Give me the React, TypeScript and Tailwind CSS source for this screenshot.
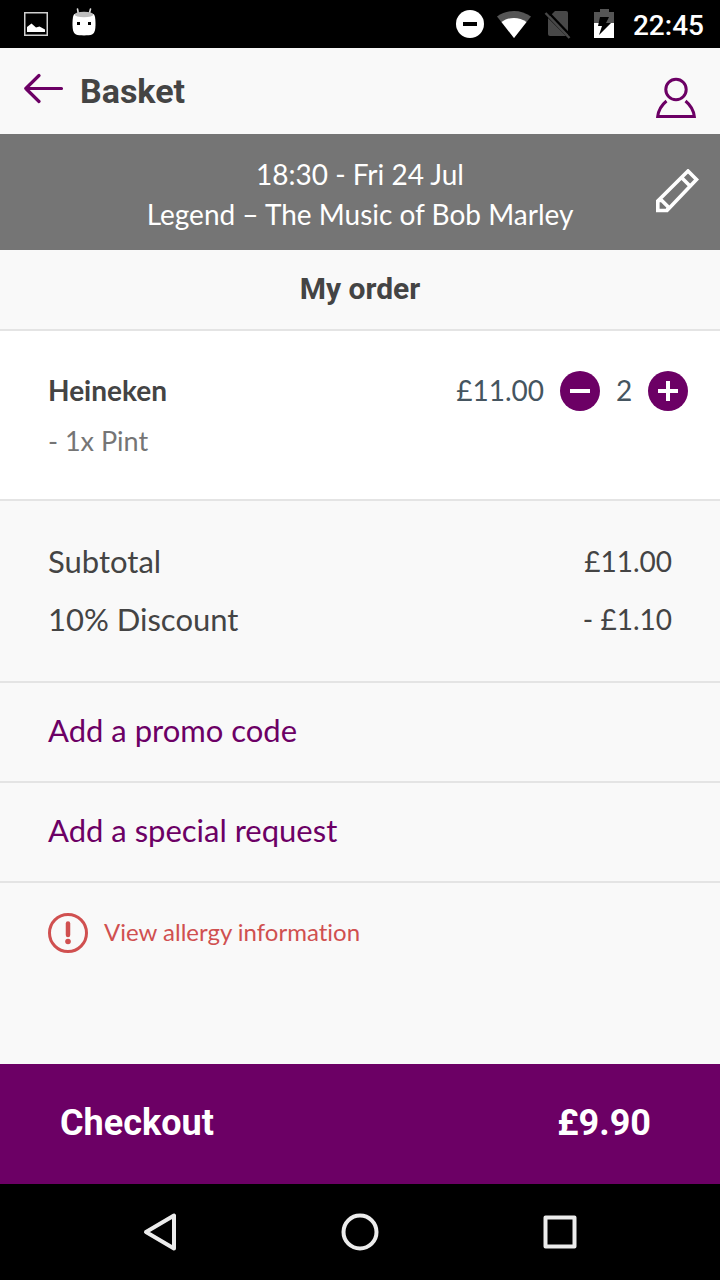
import React, { useState } from "react";

const UNIT_PRICE = 5.5;
const DISCOUNT = 0.1;

const formatPrice = (value: number) => `£${value.toFixed(2)}`;

const StatusBar: React.FC = () => (
  <div className="flex h-12 items-center justify-between bg-black pl-6 pr-4">
    <div className="flex items-center gap-6 pb-1">
      <svg className="mt-1" width="24" height="24" viewBox="0 0 24 24" aria-hidden="true">
        <rect x="0.75" y="0.75" width="22.5" height="22.5" fill="none" stroke="#d0d0d0" strokeWidth="1.5" />
        <path d="M3 20v-5l4.500-3.500 4.500 4 3.500-1 5.500 3V20z" fill="#fff" />
      </svg>
      <svg width="24" height="28" viewBox="0 0 24 28" aria-hidden="true">
        <path d="M6.500 6.500 5.500 1M17 6.500 18.500 1" stroke="#ddd" strokeWidth="1.600" strokeLinecap="round" />
        <path d="M2.500 6C1 7 .5 11 .5 16s.5 9 3.500 10.500c3 1.200 13 1.200 16 0 3-1.500 3.500-5.500 3.500-10.500s-.5-9-2-10z" fill="#fff" />
        <ellipse cx="12" cy="6.500" rx="9.500" ry="2.800" fill="#bdbdbd" />
        <rect x="5" y="14" width="3" height="3" fill="#000" />
        <rect x="16" y="14" width="3" height="3" fill="#000" />
      </svg>
    </div>
    <div className="flex items-center">
      <svg width="28" height="30" viewBox="0 0 28 30" aria-hidden="true">
        <circle cx="14" cy="15" r="14" fill="#fff" />
        <rect x="7" y="13" width="14" height="4" fill="#000" />
      </svg>
      <svg className="ml-3" width="36" height="30" viewBox="0 0 36 30" aria-hidden="true">
        <path d="M1 7.500C11 0 25 0 35 7.500L18 29z" fill="#555" />
        <path d="M5.500 13C13 7.500 23 7.500 30.500 13L18 29z" fill="#fff" />
      </svg>
      <svg className="ml-3" width="28" height="30" viewBox="0 0 28 30" aria-hidden="true">
        <path d="M11 2h11q2 0 2 2v23L5 8z" fill="#484848" />
        <path d="M4 9v16q0 2 2 2h16z" fill="#484848" />
        <path d="M3.500 2.500l23 24" stroke="#000" strokeWidth="2.500" />
        <path d="M1.500 4l24 25" stroke="#484848" strokeWidth="2.400" />
      </svg>
      <svg className="ml-[22px]" width="20" height="30" viewBox="0 0 20 30" aria-hidden="true">
        <path d="M6 0h9v3h5v12H0V3h6z" fill="#555" />
        <path d="M0 14h20v15H0z" fill="#fff" />
        <path d="M6 8h9l-3 6h5L5 26l3-9H4z" fill="#000" />
      </svg>
      <time className="ml-[19px] pt-1 font-[Roboto,sans-serif] text-[28px] leading-8 font-medium text-white">22:45</time>
    </div>
  </div>
);

const Header: React.FC = () => (
  <header className="flex h-[86px] items-center px-6">
    <button type="button" aria-label="Back">
      <svg className="block" width="40" height="36" viewBox="0 0 40 36" fill="none" stroke="#6c0065" strokeWidth="3.200" strokeLinecap="round" strokeLinejoin="round" aria-hidden="true">
        <path d="M37.500 15.500H1.800M15 2.500l-13.200 13 13.200 13" />
      </svg>
    </button>
    <h1 className="ml-4 font-[Roboto,sans-serif] text-[34px] leading-10 font-bold text-[#444]">Basket</h1>
    <button type="button" aria-label="My account" className="ml-auto pt-3.5">
      <svg className="block" width="40" height="42" viewBox="0 0 40 42" fill="none" stroke="#6c0065" strokeWidth="3" aria-hidden="true">
        <circle cx="20" cy="12.500" r="10.200" />
        <path d="M10.500 24C5 28.500 2.500 33 1.700 39.500h36.600C37.500 33 35 28.500 29.500 24" />
      </svg>
    </button>
  </header>
);

const EventBanner: React.FC = () => (
  <section className="flex h-[116px] items-center bg-[#757575] px-5 text-white">
    <div className="flex-1 pt-1 pl-11 text-center text-[28px] leading-10">
      <p>18:30 - Fri 24 Jul</p>
      <p>Legend – The Music of Bob Marley</p>
    </div>
    <button type="button" aria-label="Edit event" className="pb-0.5">
      <svg className="block" width="44" height="44" viewBox="0 0 44 44" fill="none" stroke="#fff" strokeWidth="3.600" aria-hidden="true">
        <path d="M1.800 41.500v-9.500L32 2l8.500 8.500L11 41.500zM1.800 32l3.500-1 7.200 7.200-1.500 3.300M25.500 8.500l8.500 8.500" />
      </svg>
    </button>
  </section>
);

type QuantityButtonProps = {
  label: string;
  icon: string;
  onClick: () => void;
};

const QuantityButton: React.FC<QuantityButtonProps> = ({ label, icon, onClick }) => (
  <button type="button" aria-label={label} onClick={onClick} className="size-10 rounded-full bg-[#6c0065]">
    <svg className="block" width="40" height="40" viewBox="0 0 40 40" stroke="#fff" strokeWidth="4" aria-hidden="true">
      <path d={icon} />
    </svg>
  </button>
);

const App: React.FC = () => {
  const [quantity, setQuantity] = useState(2);
  const subtotal = quantity * UNIT_PRICE;
  const discount = subtotal * DISCOUNT;

  return (
    <div className="flex min-h-screen flex-col bg-[#f9f9f9] font-[Lato,sans-serif] text-[#444] [font-variant-ligatures:none]">
      <StatusBar />
      <Header />
      <EventBanner />
      <main className="flex-1">
        <h2 className="border-b-2 border-[#e4e4e4] pt-[19px] pb-5 text-center font-[Roboto,sans-serif] text-[30px] leading-10 font-bold">
          My order
        </h2>
        <section className="border-b-2 border-[#e4e4e4] bg-white pt-10 pr-8 pb-10 pl-12">
          <div className="flex h-10 items-start text-[28px] leading-[38px]">
            <h3 className="flex-1 font-bold">Heineken</h3>
            <span className="text-[#455560]">{formatPrice(subtotal)}</span>
            <div className="ml-4 flex items-start">
              <QuantityButton label="Remove one" icon="M10 20h20" onClick={() => setQuantity(Math.max(0, quantity - 1))} />
              <span className="w-12 text-center text-[#455560]">{quantity}</span>
              <QuantityButton label="Add one" icon="M10 20h20M20 10v20" onClick={() => setQuantity(quantity + 1)} />
            </div>
          </div>
          <p className="mt-3 text-[27px] leading-9 text-[#757575]">- 1x Pint</p>
        </section>
        <dl className="border-b-2 border-[#e4e4e4] px-12 pt-[31px] pb-[33px] leading-[58px]">
          <div className="flex justify-between">
            <dt className="text-[31px]">Subtotal</dt>
            <dd className="text-[28px]">{formatPrice(subtotal)}</dd>
          </div>
          <div className="flex justify-between">
            <dt className="text-[31px]">10% Discount</dt>
            <dd className="text-[28px]">- {formatPrice(discount)}</dd>
          </div>
        </dl>
        <button type="button" className="block h-[100px] w-full border-b-2 border-[#e4e4e4] px-12 pb-1 text-left text-[31px] text-[#6c0065]">
          Add a promo code
        </button>
        <button type="button" className="block h-[100px] w-full border-b-2 border-[#e4e4e4] px-12 pb-1 text-left text-[31px] text-[#6c0065]">
          Add a special request
        </button>
        <a href="#allergy" className="flex items-start gap-4 px-12 py-[30px] text-[24px] leading-[38px] text-[#d05050]">
          <svg width="40" height="40" viewBox="0 0 40 40" fill="none" stroke="#d05050" aria-hidden="true">
            <circle cx="20" cy="20" r="18.500" strokeWidth="3" />
            <path d="M20 10.500v11.500" strokeWidth="4.500" strokeLinecap="round" />
            <circle cx="20" cy="28.500" r="2.800" fill="#d05050" stroke="none" />
          </svg>
          View allergy information
        </a>
      </main>
      <button type="button" className="flex h-[120px] items-center justify-between bg-[#6c0065] pr-[69px] pb-0.5 pl-[60px] font-[Roboto,sans-serif] text-[36px] leading-10 font-bold text-white">
        <span>Checkout</span>
        <span>{formatPrice(subtotal - discount)}</span>
      </button>
      <nav className="flex h-24 items-center justify-center gap-40 bg-black">
        <button type="button" aria-label="System back">
          <svg className="block" width="40" height="40" viewBox="0 0 40 40" fill="none" stroke="#ececec" strokeWidth="4" strokeLinejoin="round" aria-hidden="true">
            <path d="M34 3.500v33L6 20z" />
          </svg>
        </button>
        <button type="button" aria-label="Home">
          <svg className="block" width="40" height="40" viewBox="0 0 40 40" fill="none" stroke="#ececec" strokeWidth="4" aria-hidden="true">
            <circle cx="20" cy="20" r="16.500" />
          </svg>
        </button>
        <button type="button" aria-label="Recent apps">
          <svg className="block" width="40" height="40" viewBox="0 0 40 40" fill="none" stroke="#ececec" strokeWidth="4" strokeLinejoin="round" aria-hidden="true">
            <rect x="5.500" y="5.500" width="29" height="29" />
          </svg>
        </button>
      </nav>
    </div>
  );
};

export default App;
